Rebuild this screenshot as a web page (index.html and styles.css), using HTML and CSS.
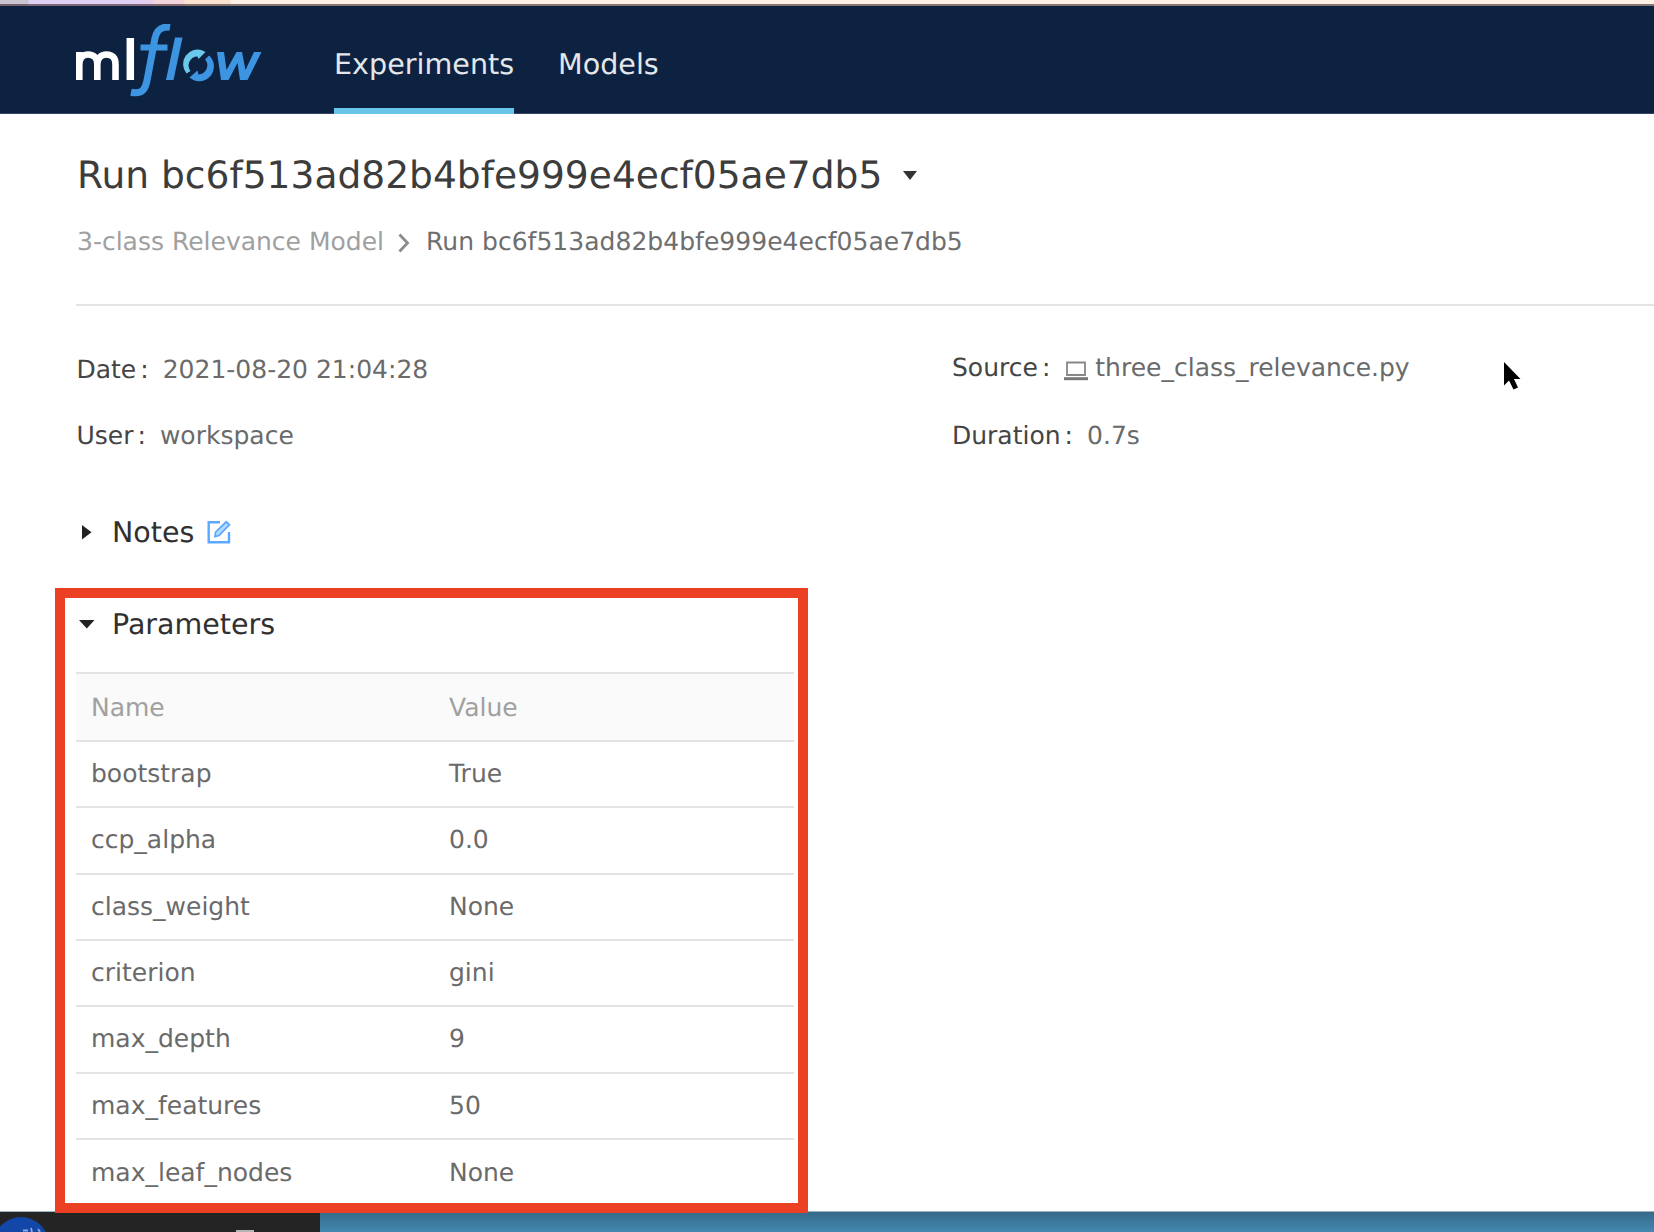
FILE: index.html
```html
<!DOCTYPE html>
<html lang="en">
<head>
<meta charset="utf-8">
<title>MLflow</title>
<link rel="stylesheet" href="styles.css">
</head>
<body>
<div class="screen">
  <div class="tabstrip"></div>
  <header class="navbar">
    <svg class="logo" viewBox="0 0 186 74" width="186" height="74" role="img" aria-label="mlflow">
      <g fill="none" stroke="#fff" stroke-width="6.6">
        <path d="M3.3 56V28M3.3 41C3.3 34 7 30.500 12 30.500C18 30.500 21.300 34 21.300 40V56M21.300 41C21.300 34 25 30.500 30.500 30.500C36.500 30.500 39.500 34 39.500 40V56"/>
        <path d="M54.300 14V56" stroke-width="7.500"/>
      </g>
      <g fill="none" stroke="#3d95e2">
        <path d="M94 3.300C84.500 2 80.500 7 78.800 15L71.500 54C69.500 66 66 70.500 55 68.300" stroke-width="7"/>
        <path d="M64.500 23.500H91.500" stroke-width="6"/>
      </g>
      <path d="M99 13.500H106.500L97.500 56H90Z" fill="#3d95e2"/>
      <path d="M110.500 49.500A14.500 14.500 0 0 1 126.500 26.500L129.500 28L122.500 35L121.500 32.500A9 9 0 0 0 114.500 47Z" fill="#6ac8ea"/>
      <path d="M133 31.500A14.500 14.500 0 0 1 113.500 53.500L121.500 46.500L122.500 50.500A9 9 0 0 0 129 35.500Z" fill="#3d95e2"/>
      <path d="M141 28H148L150.500 46L160.500 28H166L169.500 46L178 28H185.500L171.500 56H164L161.500 39L152.500 56H145Z" fill="#3d95e2"/>
    </svg>
    <nav class="nav">
      <a class="nav-link active">Experiments</a>
      <a class="nav-link">Models</a>
    </nav>
  </header>
  <main class="page">
    <h1 class="title"><span>Run bc6f513ad82b4bfe999e4ecf05ae7db5</span>
      <svg width="14" height="9" viewBox="0 0 14 9"><path d="M0 0H14L7 9Z" fill="#333"/></svg></h1>
    <div class="crumbs"><span class="parent">3-class Relevance Model</span>
      <svg width="12" height="20" viewBox="0 0 12 20"><path d="M1.500 1.500L9.500 10L1.500 18.500" fill="none" stroke="#8c8c8c" stroke-width="2.800"/></svg>
      <span class="current">Run bc6f513ad82b4bfe999e4ecf05ae7db5</span></div>
    <div class="meta">
      <div class="item date"><span class="label">Date<i>:</i></span><span>2021-08-20 21:04:28</span></div>
      <div class="item source"><span class="label">Source<i>:</i></span>
        <svg width="24" height="20" viewBox="0 0 24 20"><path d="M3 1.500H21V14H3Z" fill="none" stroke="#888" stroke-width="1.800"/><path d="M0 17.700H24" stroke="#777" stroke-width="3"/></svg>
        <span>three_class_relevance.py</span></div>
      <div class="item user"><span class="label">User<i>:</i></span><span>workspace</span></div>
      <div class="item duration"><span class="label">Duration<i>:</i></span><span>0.7s</span></div>
    </div>
    <section class="notes">
      <svg class="caret" width="16" height="16" viewBox="0 0 16 16"><path d="M3 1V15.500L12.500 8.200Z" fill="#222"/></svg>
      <h2>Notes</h2>
      <svg class="edit" width="24" height="24" viewBox="0 0 24 24" fill="none" stroke="#5aaaff" stroke-width="2.400"><path d="M13 2.200H1.700V22.300H22V12"/><path d="M8 16.500L8.600 12.200L19.200 1.800L22.400 4.800L12 15.500Z" fill="#b5dbff" stroke-width="1.800"/></svg>
    </section>
    <section class="params">
      <div class="params-head">
        <svg class="caret" width="16" height="16" viewBox="0 0 16 16"><path d="M0 4H15.500L7.800 12.500Z" fill="#222"/></svg>
        <h2>Parameters</h2>
      </div>
      <div class="table">
        <div class="row head"><span>Name</span><span>Value</span></div>
        <div class="row"><span>bootstrap</span><span>True</span></div>
        <div class="row"><span>ccp_alpha</span><span>0.0</span></div>
        <div class="row"><span>class_weight</span><span>None</span></div>
        <div class="row"><span>criterion</span><span>gini</span></div>
        <div class="row"><span>max_depth</span><span>9</span></div>
        <div class="row"><span>max_features</span><span>50</span></div>
        <div class="row last"><span>max_leaf_nodes</span><span>None</span></div>
      </div>
    </section>
  </main>
  <footer class="desktop">
    <div class="dock"><svg width="320" height="20" viewBox="0 0 320 20"><circle cx="21" cy="33" r="28" fill="#1247a8"/><path d="M23 18.500H28M31 16L32 20M38 17L40 20" stroke="#8ea9da" stroke-width="1.800"/><path d="M236 18H254V20H236Z" fill="#b5b5b5"/></svg></div>
  </footer>
</div>
<svg class="cursor" width="20" height="30" viewBox="0 0 20 30"><path d="M1 1V24.500L6 19.500L10.500 28.500L15 26.500L11 18H17.500Z" fill="#000"/></svg>
</body>
</html>
```
FILE: styles.css
```css
* { box-sizing: border-box; }
body {
  margin: 0;
  background: #fff;
  font-family: "DejaVu Sans", sans-serif;
  font-size: 25px;
  color: #6a6a6a;
  text-rendering: geometricPrecision;
}
svg { display: block; flex: none; }
.screen { width: 1654px; height: 1232px; overflow: hidden; display: flex; flex-direction: column; }
.tabstrip {
  flex: none;
  height: 6px;
  border-bottom: 2px solid rgba(60, 35, 40, .6);
  background: linear-gradient(90deg, #c9c4cf 0 28px, #dfd0f5 29px 130px, #e6cdeb 153px, #f4d4dc 154px 184px, #f9e3d0 185px 230px, #fdf0e4 231px);
}
.navbar { flex: none; height: 108px; background: #0d2240; display: flex; padding-left: 76px; border-bottom: 1px solid #34455f; }
.logo { margin-top: 18px; }
.nav { display: flex; gap: 44px; margin-left: 72px; }
.nav-link { height: 108px; font-size: 28.6px; line-height: 32px; padding-top: 42px; color: #e4e7eb; white-space: nowrap; }
.nav-link.active { width: 180px; border-bottom: 6px solid #69c5ea; }
.page { flex: none; height: 1097px; padding-left: 76px; display: flex; flex-direction: column; }
.page > * { flex: none; }
.title { margin: 39px 0 0; padding-left: 1px; height: 44px; font-size: 37.6px; line-height: 44px; font-weight: 400; color: #3c3c3c; display: flex; align-items: center; gap: 21px; }
.crumbs { height: 109px; padding: 30px 0 0 1px; border-bottom: 2px solid #e3e3e3; display: flex; line-height: 30px; white-space: nowrap; }
.crumbs svg { margin: 6px 16px 0 14px; }
.parent { color: #a0a0a0; }
.current { color: #6e6e6e; letter-spacing: .03px; }
.meta { display: grid; grid-template-columns: 876px 1fr; grid-template-rows: 66px 66px; padding-top: 49px; line-height: 30px; }
.item { display: flex; white-space: nowrap; }
.label { color: #444; }
.label i { font-style: normal; margin: 0 14px 0 4px; }
.date, .user { padding-left: .5px; }
.source { margin-top: -2px; }
.source svg { margin: 8px 7px 0 0; }
.notes, .params-head { display: flex; align-items: center; }
h2 { margin: 0 0 0 17px; font-size: 28.5px; line-height: 34px; font-weight: 400; color: #303030; padding-top: 1px; }
.notes { height: 34px; margin-top: 28px; padding-left: 3px; }
.edit { margin-left: 13px; }
.params { position: relative; width: 753px; height: 625px; margin: 39px 0 0 -21px; border: 10px solid #ec4024; padding: 9px 4px 0 11px; }
.params-head { height: 34px; padding-left: 3px; }
.table { margin-top: 31px; border-top: 2px solid #e3e3e3; width: 718px; }
.row { display: grid; grid-template-columns: 358px 1fr; padding: 17px 0 0 15px; height: 66.330px; line-height: 30px; border-bottom: 2px solid #e3e3e3; }
.head { height: 68px; background: #fafafa; color: #a0a0a0; padding-top: 19px; }
.last { border: 0; padding-top: 18px; }
.desktop { flex: 1; border-top: 1px solid #9ab4c2; background: linear-gradient(#35698a, #4388b0); }
.dock { width: 320px; height: 20px; background: #242424; }
.cursor { position: absolute; left: 1503px; top: 361px; }
```
